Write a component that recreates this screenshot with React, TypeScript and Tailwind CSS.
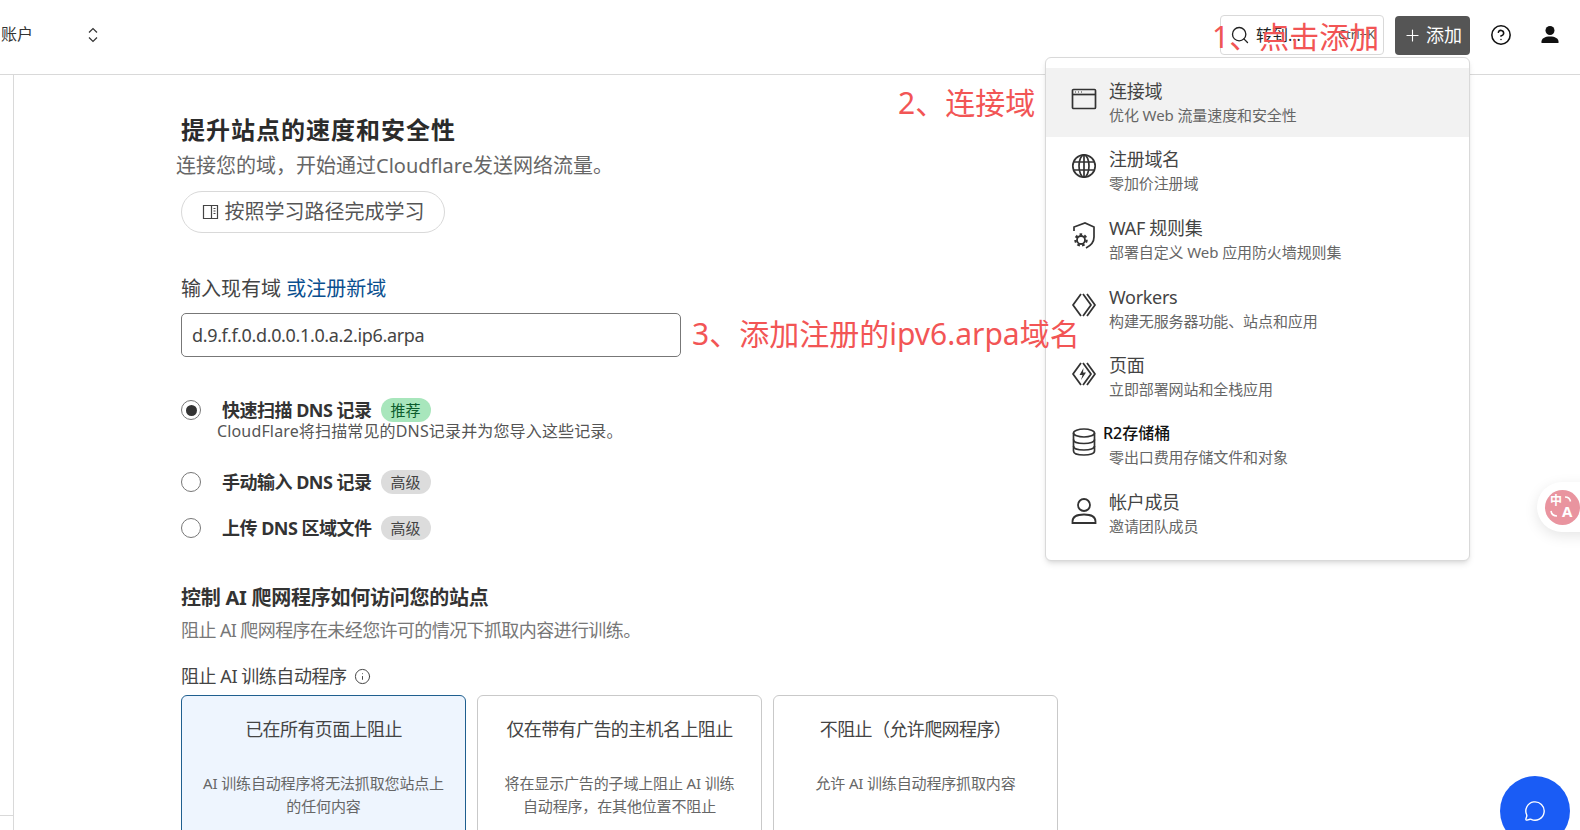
import React from "react";
import { CircleHelp, Info, MessageCircle, Plus, Search } from "lucide-react";

const WindowIcon = () => (
  <svg width="26" height="24" viewBox="0 0 26 24" fill="none" stroke="#333" strokeWidth="1.7">
    <rect x="1.5" y="2.5" width="23" height="19" rx="1" />
    <path d="M1.5 7.5h23" />
    <path d="M4 5h1M7 5h1M10 5h1" strokeWidth="1.2" />
  </svg>
);

const GlobeIcon = () => (
  <svg className="-mt-[4px]" width="26" height="26" viewBox="0 0 26 26" fill="none" stroke="#333" strokeWidth="1.7">
    <circle cx="13" cy="13" r="11.2" />
    <ellipse cx="13" cy="13" rx="5" ry="11.2" />
    <path d="M13 1.8v22.4M2.6 9h20.8M2.6 17h20.8" />
  </svg>
);

const ShieldIcon = () => (
  <svg width="26" height="30" viewBox="0 0 26 30" fill="none" stroke="#333" strokeWidth="1.7">
    <path d="M3 10V6l11-4 9 4v10c0 5-4 9-8 11" />
    <circle cx="10" cy="19" r="4" strokeWidth="1.800" />
    <circle cx="10" cy="19" r="5.600" strokeWidth="2.200" strokeDasharray="2.600 2.260" />
  </svg>
);

const WorkersIcon = () => (
  <svg width="26" height="26" viewBox="0 0 26 26" fill="none" stroke="#333" strokeWidth="1.8" strokeLinejoin="round">
    <path d="M10 2 2 13l8 11" />
    <path d="m12 2 8 11-8 11" />
    <path d="m16 2 8 11-8 11" />
  </svg>
);

const PagesIcon = () => (
  <svg width="26" height="26" viewBox="0 0 26 26" fill="none" stroke="#333" strokeWidth="1.8" strokeLinejoin="round">
    <path d="M10 2 2 13l8 11" />
    <path d="m12 2 8 11-8 11" />
    <path d="m16 2 8 11-8 11" />
    <path d="m12.500 7-4 7h3l-1.500 5 5-7.500h-3z" fill="#333" stroke="none" />
  </svg>
);

const StorageIcon = () => (
  <svg width="26" height="30" viewBox="0 0 26 30" fill="none" stroke="#333" strokeWidth="1.7">
    <ellipse cx="13" cy="6" rx="10.500" ry="4" />
    <path d="M2.500 6v18c0 2.500 4.500 4 10.500 4s10.500-1.500 10.500-4V6" />
    <path d="M2.500 12.500c0 2.500 4.500 4 10.500 4s10.500-1.500 10.500-4M2.500 19c0 2.500 4.500 4 10.500 4s10.500-1.500 10.500-4" />
    <path d="M5.500 13.500v.1M5.500 20v.1M5.500 26v.1" strokeWidth="1.4" />
  </svg>
);

const MemberIcon = () => (
  <svg width="26" height="28" viewBox="0 0 26 28" fill="none" stroke="#333" strokeWidth="1.8">
    <circle cx="13" cy="8" r="6" />
    <path d="M1.500 26v-1.500c0-4.500 4-7 11.500-7s11.500 2.500 11.500 7V26z" />
  </svg>
);

const menuItems = [
  { icon: <WindowIcon />, title: "连接域", sub: "优化 Web 流量速度和安全性", active: true },
  { icon: <GlobeIcon />, title: "注册域名", sub: "零加价注册域" },
  { icon: <ShieldIcon />, title: "WAF 规则集", sub: "部署自定义 Web 应用防火墙规则集" },
  { icon: <WorkersIcon />, title: "Workers", sub: "构建无服务器功能、站点和应用" },
  { icon: <PagesIcon />, title: "页面", sub: "立即部署网站和全栈应用" },
  { icon: <StorageIcon />, title: "R2存储桶", sub: "零出口费用存储文件和对象", edited: true },
  { icon: <MemberIcon />, title: "帐户成员", sub: "邀请团队成员" },
];

const cards = [
  { title: "已在所有页面上阻止", desc: "AI 训练自动程序将无法抓取您站点上的任何内容", selected: true },
  { title: "仅在带有广告的主机名上阻止", desc: "将在显示广告的子域上阻止 AI 训练自动程序，在其他位置不阻止" },
  { title: "不阻止（允许爬网程序）", desc: "允许 AI 训练自动程序抓取内容" },
];

const RadioRow = ({ label, badge, checked, green }: { label: string; badge: string; checked?: boolean; green?: boolean }) => (
  <div className="flex items-center h-[24px]">
    <span className="w-[20px] h-[20px] rounded-full border border-[#777] flex items-center justify-center shrink-0">
      {checked && <span className="w-[11px] h-[11px] rounded-full bg-[#333]" />}
    </span>
    <span className="ml-[21px] text-[18px] font-bold text-[#333] whitespace-nowrap -tracking-[0.5px]">{label}</span>
    <span
      className={`ml-[9px] w-[50px] h-[24px] rounded-full flex items-center justify-center text-[15px] ${
        green ? "bg-[#a8e6bc] text-[#0b5c2c]" : "bg-[#dcdcdc] text-[#444]"
      }`}
    >
      {badge}
    </span>
  </div>
);

export default function App() {
  return (
    <div className="relative h-[830px] w-[1580px] overflow-hidden bg-white font-['Noto_Sans','Noto_Sans_CJK_SC',sans-serif] text-[#333]">
      <header className="h-[75px] border-b border-[#d9d9d9] flex items-center pl-[1px] pr-[20px] pb-[4px]">
        <span className="text-[16px] leading-none text-[#333] -mt-[2px]">账户</span>
        <svg className="ml-[54px]" width="12" height="16" viewBox="0 0 12 16" fill="none" stroke="#333" strokeWidth="1.2">
          <path d="m2 5.500 4-4 4 4M2 10.500l4 4 4-4" />
        </svg>
        <div className="ml-auto flex items-center">
          <div className="w-[164px] h-[40px] border border-[#d9d9d9] rounded-[4px] flex items-center pl-[9px] pr-[8px]">
            <Search size={20} strokeWidth={1.6} className="text-[#222]" />
            <span className="ml-[6px] text-[16px] text-[#222]">转到...</span>
            <span className="ml-auto text-[13px] text-[#555]">Ctrl+K</span>
          </div>
          <button className="ml-[11px] w-[75px] h-[39px] rounded-[4px] bg-[#555] text-white flex items-center justify-center gap-[4px] text-[18px]">
            <Plus size={19} strokeWidth={1.4} />
            添加
          </button>
          <CircleHelp size={22} strokeWidth={1.7} className="ml-[20px] text-[#111]" />
          <svg className="ml-[28px]" width="20" height="20" viewBox="0 0 20 20" fill="#111">
            <circle cx="10" cy="5.500" r="4.500" />
            <path d="M1.500 18v-1.500c0-3 3.500-5 8.500-5s8.500 2 8.500 5V18z" />
          </svg>
        </div>
      </header>

      <div className="flex h-[755px]">
        <div className="relative w-[14px] border-r border-[#d9d9d9] shrink-0">
          <div className="absolute left-0 right-0 top-[740px] border-t border-[#d9d9d9]" />
        </div>
        <main className="pl-[167px] pt-[38px]">
          <h1 className="text-[24px] leading-[34px] font-bold text-[#2b2b2b] tracking-[1px]">提升站点的速度和安全性</h1>
          <p className="-ml-[5px] mt-[2px] text-[20px] leading-[34px] text-[#666]">连接您的域，开始通过Cloudflare发送网络流量。</p>
          <button className="mt-[8px] w-[264px] h-[42px] rounded-full border border-[#d9d9d9] flex items-center justify-center gap-[6px] text-[20px] text-[#555]">
            <svg width="17" height="16" viewBox="0 0 17 16" fill="none" stroke="#444" strokeWidth="1.2">
              <path d="M1.500 1.500h14v13h-14zM9.500 1.500v13M11.500 4.500h2M11.500 7h2M11.500 9.500h2" />
            </svg>
            按照学习路径完成学习
          </button>

          <div className="mt-[41px] text-[20px] leading-[30px] text-[#444]">
            输入现有域 <span className="text-[#0a4f8f]">或注册新域</span>
          </div>
          <div className="mt-[9px] w-[500px] h-[44px] border border-[#777] rounded-[5px] flex items-center pl-[10px] text-[18px] text-[#444] -tracking-[0.35px]">
            d.9.f.f.0.d.0.0.1.0.a.2.ip6.arpa
          </div>

          <div className="mt-[41px]">
            <RadioRow label="快速扫描 DNS 记录" badge="推荐" checked green />
            <p className="ml-[36px] text-[16px] leading-[18px] tracking-[0.15px] text-[#555]">CloudFlare将扫描常见的DNS记录并为您导入这些记录。</p>
          </div>
          <div className="mt-[30px]">
            <RadioRow label="手动输入 DNS 记录" badge="高级" />
          </div>
          <div className="mt-[22px]">
            <RadioRow label="上传 DNS 区域文件" badge="高级" />
          </div>

          <h2 className="mt-[44px] text-[20px] leading-[28px] font-bold text-[#333] -tracking-[0.25px] whitespace-nowrap">控制 AI 爬网程序如何访问您的站点</h2>
          <p className="mt-[5px] text-[18px] leading-[26px] text-[#777] whitespace-nowrap -tracking-[0.6px]">阻止 AI 爬网程序在未经您许可的情况下抓取内容进行训练。</p>
          <div className="mt-[20px] flex items-center text-[18px] leading-[26px] text-[#444] -tracking-[0.45px]">
            阻止 AI 训练自动程序
            <Info size={17} strokeWidth={1.4} className="ml-[7px] text-[#444]" />
          </div>

          <div className="mt-[6px] flex gap-[11px]">
            {cards.map((c) => (
              <div
                key={c.title}
                className={`w-[285px] h-[160px] shrink-0 rounded-[6px] border px-[20px] pt-[20px] text-center ${
                  c.selected ? "bg-[#eef5fe] border-[#1f5f8f]" : "bg-white border-[#c9c9c9]"
                }`}
              >
                <div className="text-[18px] leading-[26px] text-[#444] whitespace-nowrap -tracking-[0.6px]">{c.title}</div>
                <div className="mt-[30px] text-[15px] leading-[23px] text-[#666] -tracking-[0.15px]">{c.desc}</div>
              </div>
            ))}
          </div>
        </main>
      </div>

      {/* add menu */}
      <div className="absolute left-[1045px] top-[57px] w-[425px] h-[504px] bg-white border border-[#d9d9d9] rounded-[6px] shadow-md pt-[10px]">
        {menuItems.map((m) => (
          <div key={m.title} className={`relative h-[68.600px] pl-[25px] flex items-center ${m.active ? "bg-[#f2f2f2]" : ""}`}>
            <span className="w-[26px] flex justify-center shrink-0 -mt-[6px]">{m.icon}</span>
            <div className="ml-[12px] pt-[1px] flex flex-col">
              <span className={m.edited ? "-ml-[6px] -mt-[2px] text-[16px] leading-[24px] font-medium text-[#111]" : "text-[18px] leading-[24px] text-[#444] -tracking-[0.3px]"}>{m.title}</span>
              <span className="text-[15px] leading-[24px] text-[#666] whitespace-nowrap -tracking-[0.1px]">{m.sub}</span>
            </div>
          </div>
        ))}
      </div>

      {/* screenshot annotations */}
      <span className="absolute left-[1212px] top-[16px] text-[30px] leading-[42px] text-[#f25555] whitespace-nowrap">1、点击添加</span>
      <span className="absolute left-[898px] top-[82px] text-[30px] leading-[42px] text-[#f25555] whitespace-nowrap">2、连接域</span>
      <span className="absolute left-[692px] top-[313px] text-[30px] leading-[42px] text-[#f25555] whitespace-nowrap">3、添加注册的ipv6.arpa域名</span>

      {/* translate tab */}
      <div className="absolute left-[1537px] top-[482px] w-[60px] h-[50px] rounded-l-[25px] bg-white shadow-[0_4px_14px_rgba(0,0,0,0.1)] flex items-center pl-[8px]">
        <span className="relative w-[35px] h-[35px] rounded-full bg-[#e9949f] text-white font-bold leading-none">
          <span className="absolute left-[5px] top-[5px] text-[12px]">中</span>
          <span className="absolute left-[17px] top-[14px] text-[15px]">A</span>
          <svg className="absolute left-0 top-0" width="35" height="35" viewBox="0 0 35 35" fill="none" stroke="#fff" strokeWidth="1.6">
            <path d="M20 7c3 0 5 1.500 5.500 4.500M6 21c.5 3 2.500 5 6 5" />
          </svg>
        </span>
      </div>

      {/* chat button */}
      <div className="absolute left-[1500px] top-[776px] w-[70px] h-[70px] rounded-full bg-[#1a5cf5] flex items-center justify-center">
        <MessageCircle size={22} strokeWidth={1.5} className="text-white -mt-[1px]" />
      </div>
    </div>
  );
}
